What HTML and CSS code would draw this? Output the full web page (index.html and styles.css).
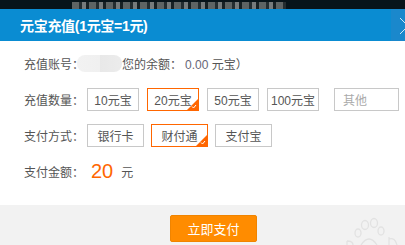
FILE: index.html
```html
<!DOCTYPE html>
<html lang="zh-CN">
<head>
<meta charset="utf-8">
<title>元宝充值</title>
<link rel="stylesheet" href="styles.css">
</head>
<body>
<div class="page">
  <div class="topstrip"><span class="bgart"></span></div>
  <div class="header">
    <div class="title">元宝充值(1元宝=1元)</div>
    <div class="close">
      <svg width="14" height="32" viewBox="0 0 14 32"><path d="M9 9 L17 17 L9 25" fill="none" stroke="#cfe8f7" stroke-width="1"/></svg>
    </div>
  </div>
  <div class="content">
    <div class="row">
      <span class="label">充值账号：</span>
      <span class="blur"></span>
      <span class="text">您的余额：<span class="num">0.00</span> 元宝）</span>
    </div>
    <div class="row">
      <span class="label">充值数量：</span>
      <div class="opts amount">
        <span class="opt">10元宝</span>
        <span class="opt selected">20元宝<svg class="tick" width="11" height="11" viewBox="0 0 11 11"><path d="M11 0 L11 11 L0 11 Z" fill="#ff6600"/><path d="M5 7.5 L6.5 9 L9 6" fill="none" stroke="#fff" stroke-width="1"/></svg></span>
        <span class="opt">50元宝</span>
        <span class="opt">100元宝</span>
        <span class="opt other">其他</span>
      </div>
    </div>
    <div class="row">
      <span class="label">支付方式：</span>
      <div class="opts pay">
        <span class="opt">银行卡</span>
        <span class="opt selected">财付通<svg class="tick" width="11" height="11" viewBox="0 0 11 11"><path d="M11 0 L11 11 L0 11 Z" fill="#ff6600"/><path d="M5 7.5 L6.5 9 L9 6" fill="none" stroke="#fff" stroke-width="1"/></svg></span>
        <span class="opt">支付宝</span>
      </div>
    </div>
    <div class="row">
      <span class="label">支付金额：</span>
      <span class="price">20</span>
      <span class="unit">元</span>
    </div>
  </div>
  <div class="footer">
    <button class="paybtn">立即支付</button>
    <svg class="paw" width="60" height="30" viewBox="0 0 60 30"><g fill="none" stroke="#e2e2e2" stroke-width="1.3"><ellipse cx="20" cy="10" rx="3.5" ry="4.5"/><ellipse cx="29" cy="8" rx="3.5" ry="4.5"/><ellipse cx="13" cy="18" rx="3" ry="4"/><ellipse cx="36" cy="16" rx="3" ry="4"/><path d="M16 30 Q24 18 32 30"/><path d="M2 26 L2 30 M2 26 Q8 26 8 30"/><path d="M44 22 L44 30 M44 24 Q50 22 52 30"/></g></svg>
  </div>
</div>
</body>
</html>
```
FILE: styles.css
```css
* { box-sizing: border-box; }
html, body { margin: 0; padding: 0; }
body {
  width: 405px;
  height: 245px;
  overflow: hidden;
  background: #fff;
  font-family: "Liberation Sans", "Noto Sans CJK SC", sans-serif;
  color: #555;
}
.page { width: 405px; height: 245px; display: flex; flex-direction: column; }
.topstrip {
  height: 9px;
  background: #07141a;
  overflow: hidden;
  display: flex;
  align-items: flex-end;
  padding-left: 72px;
}
.bgart {
  width: 214px;
  height: 7px;
  background: repeating-linear-gradient(90deg, #6e7272 0 7px, #2a3234 7px 10px, #8a8e8e 10px 14px, #1c2426 14px 17px);
  filter: blur(0.7px);
  opacity: 0.85;
}
.header {
  height: 32px;
  background: #0a8cd2;
  display: flex;
  align-items: center;
  justify-content: space-between;
}
.title {
  padding-left: 20px;
  color: #fff;
  font-size: 14px;
  font-weight: bold;
  letter-spacing: -0.3px;
}
.close {
  width: 14px;
  height: 32px;
  background: #1a88cc;
  overflow: hidden;
}
.close svg { display: block; }
.content {
  flex: 0 0 164px;
  padding: 11px 0 0 24px;
  display: flex;
  flex-direction: column;
  gap: 13px;
  font-size: 12px;
}
.row {
  height: 23px;
  display: flex;
  align-items: center;
}
.label { width: 63px; flex: none; color: #555; }
.blur {
  width: 45px;
  height: 17px;
  margin-left: -10px;
  border-radius: 8px;
  background: linear-gradient(90deg, #f2f2f2 0%, #f0f0f0 50%, #e8e8e8 50%, #ececec 100%);
}
.text { color: #555; }
.num { color: #667; margin-left: 3px; }
.opts { display: flex; gap: 8px; height: 23px; }
.opt {
  position: relative;
  height: 23px;
  border: 1px solid #c8c8c8;
  display: flex;
  align-items: center;
  justify-content: center;
  color: #555;
  font-size: 12px;
  background: #fff;
}
.amount .opt { width: 52px; }
.amount .opt.other {
  width: 65px;
  margin-left: 7px;
  color: #aaa;
  justify-content: flex-start;
  padding-left: 8px;
}
.pay { gap: 7px; }
.pay .opt { width: 57px; }
.opt.selected { border-color: #ff6600; }
.tick { position: absolute; right: 0; bottom: 0; display: block; }
.price {
  color: #ff6600;
  font-size: 20px;
  margin-left: 4px;
}
.unit { margin-left: 8px; font-size: 12px; }
.footer {
  flex: 1;
  background: #f2f2f2;
  position: relative;
  padding: 10px 0 0 170px;
}
.paybtn {
  width: 87px;
  height: 27px;
  border: 1px solid #f08400;
  border-radius: 2px;
  background: #ff8c00;
  color: #fff;
  font-family: "Noto Sans CJK SC", sans-serif;
  font-size: 13px;
  padding: 0;
  display: block;
}
.paw { position: absolute; right: 0; bottom: 0; }
```
